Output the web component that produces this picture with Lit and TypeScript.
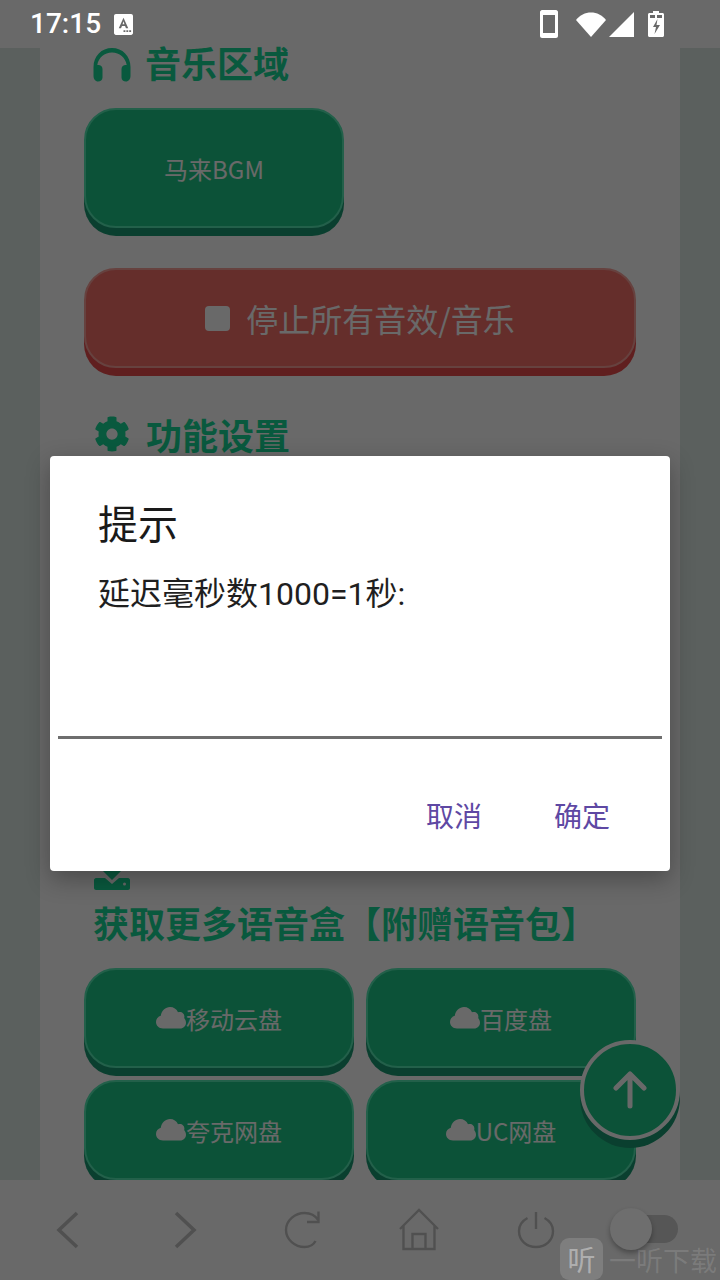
import { LitElement, html, css } from "lit";
import { customElement } from "lit/decorators.js";

const cloud = html`<svg class="cloud" viewBox="0 0 30 22"><path fill="currentColor" d="M7 21.500C3 21.500 0 18.600 0 15c0-3 2-5.400 4.800-6.200C5.400 3.700 9.500 0 14 0c3.600 0 6.700 2 8 5.200 0.600-0.200 1.200-0.300 1.800-0.300 2.600 0 4.600 2.100 4.600 4.700 0 0.500-0.100 1-0.200 1.400C29 12 30 13.800 30 15.700c0 3.200-2.600 5.800-5.800 5.800z"/></svg>`;

@customElement("app-root")
export class AppRoot extends LitElement {
  static styles = css`
    :host { display: block; width: 720px; height: 1280px; position: relative; overflow: hidden; background: #fff; font-family: "Noto Sans CJK SC", "Noto Sans", sans-serif; }
    .screen { display: flex; flex-direction: column; height: 1280px; }
    .status-spacer { height: 48px; flex: none; }
    .page { flex: 1; min-height: 0; display: flex; }
    .gutter { width: 40px; flex: none; background: #dceae5; }
    .content { flex: 1; background: #fff; padding: 0 44px; display: flex; flex-direction: column; }
    h2 { margin: 0; font-size: 36px; font-weight: 700; color: #18d896; display: flex; align-items: center; gap: 16px; flex: none; padding-left: 10px; }
    .music { line-height: 28px; padding: 0 0 26px 9px; align-items: flex-start; gap: 14px; }
    .icon-h { width: 38px; height: 34px; flex: none; }
    .btn { box-sizing: border-box; flex: none; display: flex; align-items: center; justify-content: center; color: #fff; border-radius: 32px; border: 2px solid #55e8b4; background: #1fc888; box-shadow: 0 8px 0 #1a9a72; }
    .bgm { width: 260px; height: 120px; font-size: 24px; margin-bottom: 40px; }
    .stop { height: 100px; font-size: 32px; gap: 16px; background: #f5706a; border-color: #f8a09a; box-shadow: 0 8px 0 #e84c4c; }
    .stop-square { width: 25px; height: 25px; border-radius: 4px; background: #fff; }
    .settings { margin-top: 46px; line-height: 40px; height: 40px; }
    .gear { width: 36px; height: 36px; flex: none; }
    .hidden-settings { height: 414px; flex: none; }
    .dl-icon { margin-left: 10px; width: 36px; height: 22px; flex: none; }
    .more { padding: 12px 0 0 9px; line-height: 40px; white-space: nowrap; }
    .grid { margin-top: 26px; display: grid; grid-template-columns: 270px 270px; gap: 12px; }
    .grid .btn { height: 100px; font-size: 24px; }
    .cloud { width: 30px; height: 22px; flex: none; }
    .bottom { height: 100px; flex: none; background: #fff; display: flex; align-items: center; padding-left: 10px; position: relative; }
    .nav { width: 116.800px; display: flex; justify-content: center; }
    .nav svg { width: 44px; height: 44px; fill: none; stroke: #c3c3c3; stroke-width: 2.400; }
    .nav .chev { stroke-width: 3.600; }
    .switch { width: 56px; height: 28px; margin-left: 28px; background: #d0d0d0; border-radius: 14px; margin-top: -2px; }
    .fab { position: absolute; left: 580px; top: 1040px; width: 100px; height: 100px; box-sizing: border-box; border-radius: 50%; border: 4px solid #fff; background: #1fc888; box-shadow: 0 8px 0 #1a9a72; display: flex; align-items: center; justify-content: center; }
    .fab svg { width: 36px; height: 38px; }
    .scrim { position: absolute; inset: 0; background: rgba(0,0,0,.59); }
    .thumb { position: absolute; left: 610px; top: 1208px; width: 42px; height: 42px; border-radius: 50%; background: #6e6e6e; box-shadow: 0 3px 5px rgba(0,0,0,.3); }
    .status { position: absolute; left: 0; top: 0; right: 0; height: 48px; display: flex; align-items: center; color: #fff; padding: 0 56px 0 30px; box-sizing: border-box; }
    .time { font: 500 28px/48px Roboto, sans-serif; }
    .status-a { margin-left: 13px; width: 19px; height: 21px; }
    .status-right { margin-left: auto; display: flex; align-items: center; }
    .dialog { position: absolute; left: 50px; top: 456px; width: 620px; height: 415px; background: #fff; border-radius: 4px; box-shadow: 0 8px 24px rgba(0,0,0,.3); box-sizing: border-box; display: flex; flex-direction: column; padding: 0 8px; }
    .d-title { margin: 0; padding: 40px 0 0 40px; font-size: 40px; line-height: 52px; font-weight: 400; color: #1a1a1a; }
    .d-msg { padding: 23px 0 0 40px; font-size: 32px; line-height: 46px; color: #1f1f1f; font-family: Roboto, "Noto Sans CJK SC", sans-serif; }
    .d-line { height: 3px; background: #6e6e6e; margin-top: 119px; }
    .d-actions { margin-top: auto; display: flex; justify-content: flex-end; gap: 72px; padding: 0 52px 38px 0; color: #5e48a3; font-size: 28px; line-height: 36px; }
    .wm { position: absolute; left: 560px; top: 1238px; height: 42px; display: flex; align-items: center; gap: 6px; color: rgba(255,255,255,.13); font-size: 27px; white-space: nowrap; }
    .wm-logo { width: 43px; height: 42px; border-radius: 9px; background: rgba(255,255,255,.14); display: flex; align-items: center; justify-content: center; font-size: 28px; color: rgba(255,255,255,.4); }
  `;

  render() {
    return html`
      <div class="screen">
        <div class="status-spacer"></div>
        <div class="page">
          <div class="gutter"></div>
          <div class="content">
            <h2 class="music">
              <svg class="icon-h" viewBox="0 0 38 34"><path fill="#18d896" d="M19 0C8.500 0 0.500 8 0.500 19v9c0 3 2 5.500 4.500 5.500s4.500-1.500 4.500-4V21c0-2.500-2-4-4-4h-1.200C5.500 9.500 11.500 4.500 19 4.500S32.500 9.500 33.700 17h-1.200c-2 0-4 1.500-4 4v8.500c0 2.500 2 4 4.500 4s4.500-2.500 4.500-5.500v-9C37.500 8 29.500 0 19 0z"/></svg>
              音乐区域
            </h2>
            <div class="btn bgm">马来BGM</div>
            <div class="btn stop"><span class="stop-square"></span>停止所有音效/音乐</div>
            <h2 class="settings">
              <svg class="gear" viewBox="0 0 512 512"><path fill="#18d896" d="M487.400 315.700l-42.600-24.600c4.300-23.200 4.300-47 0-70.200l42.600-24.600c4.900-2.800 7.100-8.600 5.500-14-11.100-35.600-30-67.800-54.700-94.600-3.800-4.100-10-5.100-14.800-2.300L380.800 110c-17.900-15.400-38.500-27.300-60.800-35.100V25.800c0-5.600-3.900-10.500-9.400-11.700-36.700-8.200-74.300-7.800-109.200 0-5.500 1.200-9.400 6.100-9.400 11.700V75c-22.200 7.900-42.800 19.800-60.800 35.100L88.700 85.500c-4.900-2.800-11-1.900-14.800 2.300-24.700 26.700-43.600 58.900-54.700 94.600-1.700 5.400.6 11.200 5.500 14L67.300 221c-4.300 23.200-4.300 47 0 70.200l-42.600 24.600c-4.900 2.800-7.100 8.600-5.500 14 11.100 35.600 30 67.800 54.700 94.600 3.800 4.100 10 5.100 14.800 2.300l42.600-24.600c17.900 15.400 38.500 27.300 60.800 35.100v49.200c0 5.600 3.900 10.500 9.400 11.700 36.700 8.200 74.300 7.800 109.200 0 5.500-1.200 9.400-6.100 9.400-11.700v-49.200c22.200-7.900 42.800-19.800 60.800-35.100l42.600 24.600c4.900 2.800 11 1.900 14.800-2.300 24.700-26.700 43.600-58.900 54.700-94.600 1.500-5.500-.7-11.300-5.600-14.100zM256 336c-44.100 0-80-35.900-80-80s35.900-80 80-80 80 35.900 80 80-35.900 80-80 80z"/></svg>
              功能设置
            </h2>
            <div class="hidden-settings"></div>
            <svg class="dl-icon" viewBox="0 0 36 22"><path fill="#18d896" fill-rule="evenodd" d="M9 0h18v3L18 12 9 3zM2 10h9l7 6 7-6h9c1 0 2 1 2 2v8c0 1-1 2-2 2H2c-1 0-2-1-2-2v-8c0-1 1-2 2-2zm27 6a1.500 1.500 0 1 0 3 0 1.500 1.500 0 0 0-3 0z"/></svg>
            <h2 class="more">获取更多语音盒【附赠语音包】</h2>
            <div class="grid">
              <div class="btn">${cloud}移动云盘</div>
              <div class="btn">${cloud}百度盘</div>
              <div class="btn">${cloud}夸克网盘</div>
              <div class="btn">${cloud}UC网盘</div>
            </div>
          </div>
          <div class="gutter"></div>
        </div>
        <div class="bottom">
          <div class="nav"><svg class="chev" viewBox="0 0 44 44"><path d="M31 5 13 22l18 17"/></svg></div>
          <div class="nav"><svg class="chev" viewBox="0 0 44 44"><path d="M13 5l18 17-18 17"/></svg></div>
          <div class="nav"><svg viewBox="0 0 44 44"><path d="M38 12C35 7 30 5 24.500 5 15 5 6 12.500 6 22s9 17 18.500 17c4.500 0 9-2 11-6M38.500 3.500V14H27"/></svg></div>
          <div class="nav"><svg viewBox="0 0 44 44"><path d="M3 21 22 2l19 19M6.500 18v23h31V18M15.500 41V26h13v15"/></svg></div>
          <div class="nav"><svg viewBox="0 0 44 44"><path d="M22 4v17M13.500 10C8 13 5 17.500 5 23c0 9.500 7.500 16 17 16s17-6.500 17-16c0-5.500-3-10-8.500-13"/></svg></div>
          <div class="switch"></div>
        </div>
      </div>
      <div class="fab"><svg viewBox="0 0 36 38"><path fill="none" stroke="#fff" stroke-width="5" stroke-linecap="round" stroke-linejoin="round" d="M18 35V3M4 17 18 3l14 14"/></svg></div>
      <div class="scrim"></div>
      <div class="thumb"></div>
      <div class="status">
        <span class="time">17:15</span>
        <svg class="status-a" viewBox="0 0 20 22"><path fill="#fff" fill-rule="evenodd" d="M2 0h16c1 0 2 1 2 2v18c0 1-1 2-2 2H2c-1 0-2-1-2-2V2C0 1 1 0 2 0zm8 4L5 15h2.400l1-2.500h3.200l1 2.500H15L10 4zm0 3.500 1 3.200H9zM10 17h2v2h-2zm3 0h2v2h-2zm3 0h2v2h-2z"/></svg>
        <div class="status-right">
          <svg width="18" height="28" viewBox="0 0 18 28"><path fill="#fff" fill-rule="evenodd" d="M2 0h14c1 0 2 1 2 2v24c0 1-1 2-2 2H2c-1 0-2-1-2-2V2C0 1 1 0 2 0zm1 5v18h12V5z"/></svg>
          <svg style="margin-left:18px" width="30" height="25" viewBox="0 0 30 25"><path fill="#fff" d="M15 25 0 8C4 3 9 0.500 15 0.500S26 3 30 8z"/></svg>
          <svg style="margin-left:3px" width="25" height="25" viewBox="0 0 25 25"><path fill="#fff" d="M25 0v25H0z"/></svg>
          <svg style="margin-left:14px" width="16" height="26" viewBox="0 0 16 26"><path fill="#fff" fill-rule="evenodd" d="M5 0h6v2h3.500c.8 0 1.500.7 1.500 1.500v21c0 .8-.7 1.500-1.500 1.500h-13C.7 26 0 25.300 0 24.500v-21C0 2.700.7 2 1.500 2H5zM2 4v3h5V4zm7 0v3h5V4zm.500 4L5 16h3l-1.500 7L12 14H8.500z"/></svg>
        </div>
      </div>
      <div class="dialog">
        <h3 class="d-title">提示</h3>
        <div class="d-msg">延迟毫秒数1000=1秒:</div>
        <div class="d-line"></div>
        <div class="d-actions"><span>取消</span><span>确定</span></div>
      </div>
      <div class="wm"><span class="wm-logo">听</span><span>一听下载</span></div>
    `;
  }
}
